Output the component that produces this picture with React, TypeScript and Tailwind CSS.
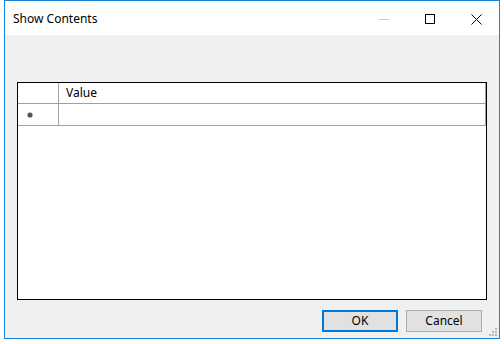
import React from 'react'

const font = { fontFamily: '"Segoe UI", "Noto Sans", "Liberation Sans", sans-serif' }

function CaptionButtons() {
  return (
    <div className="flex h-full">
      {/* minimize (disabled) */}
      <div className="w-[46px] flex items-center justify-center">
        <div className="w-[10px] h-px bg-[#cccccc]" />
      </div>
      {/* maximize */}
      <div className="w-[46px] flex items-center justify-center">
        <div className="w-[10px] h-[10px] border border-black" />
      </div>
      {/* close */}
      <div className="w-[46px] flex items-center justify-center">
        <svg width="11" height="11" viewBox="0 0 11 11">
          <path d="M0.5 0.5 L10.5 10.5 M10.5 0.5 L0.5 10.5" stroke="#000" strokeWidth="1" />
        </svg>
      </div>
    </div>
  )
}

function SizeGrip() {
  return (
    <svg width="10" height="10" viewBox="0 0 10 10" className="absolute right-[1px] bottom-[1px]">
      <g fill="#b8b8b8">
        <rect x="7" y="1" width="2" height="2" />
        <rect x="4" y="4" width="2" height="2" />
        <rect x="7" y="4" width="2" height="2" />
        <rect x="1" y="7" width="2" height="2" />
        <rect x="4" y="7" width="2" height="2" />
        <rect x="7" y="7" width="2" height="2" />
      </g>
    </svg>
  )
}

export default function App() {
  return (
    <div className="w-[504px] h-[344px] bg-white pl-[4px]" style={font}>
      <div className="w-[496px] h-[339px] border border-[#1883d7] flex flex-col">
        {/* Title bar */}
        <div className="h-[34px] bg-white flex items-start justify-between">
          <span className="text-[12px] text-black pl-[8px] pt-[10px] leading-[16px]">Show Contents</span>
          <div className="h-[36px]">
            <CaptionButtons />
          </div>
        </div>

        {/* Body */}
        <div className="flex-1 bg-[#f0f0f0] flex flex-col pt-[47px] px-[12px] relative">
          <div className="h-[218px] border border-black bg-white">
            <div className="flex h-[21px] border-b border-[#a0a0a0]">
              <div className="w-[41px] border-r border-[#a0a0a0]" />
              <div className="flex-1 border-r border-[#a0a0a0] text-[12px] leading-[20px] pl-[7px] text-black">Value</div>
            </div>
            <div className="flex h-[22px] border-b border-[#a0a0a0]">
              <div className="w-[41px] border-r border-[#a0a0a0] flex items-center pl-[9px]">
                <svg width="6" height="6" viewBox="0 0 6 6">
                  <circle cx="3" cy="3" r="2.6" fill="#555555" />
                </svg>
              </div>
              <div className="flex-1 border-r border-[#a0a0a0]" />
            </div>
          </div>

          <div className="flex justify-end gap-[8px] mt-[10px] pr-[5px]">
            <button className="w-[76px] h-[22px] bg-[#e1e1e1] border-2 border-[#0078d7] text-[12px] text-black leading-none">
              OK
            </button>
            <button className="w-[76px] h-[22px] bg-[#e1e1e1] border border-[#adadad] text-[12px] text-black leading-none">
              Cancel
            </button>
          </div>
          <SizeGrip />
        </div>
      </div>
    </div>
  )
}
